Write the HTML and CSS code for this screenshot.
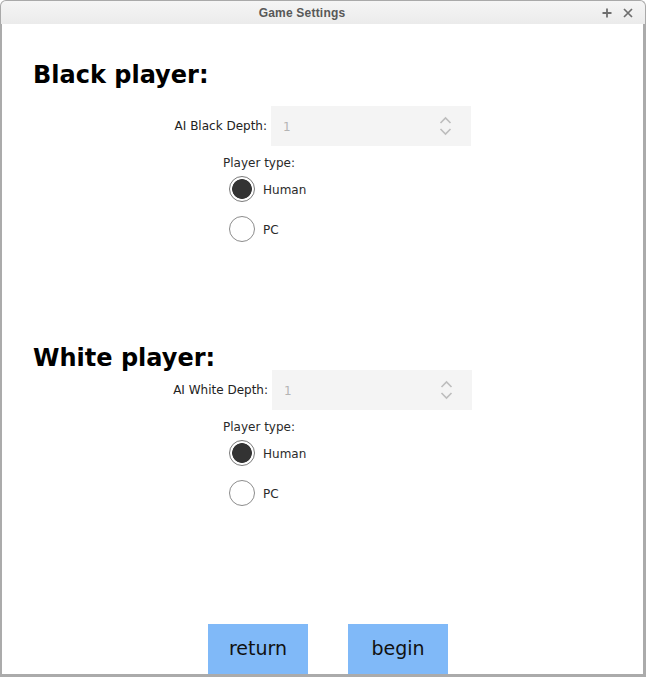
FILE: index.html
```html
<!DOCTYPE html>
<html>
<head>
<meta charset="utf-8">
<title>Game Settings</title>
<link rel="stylesheet" href="styles.css">
</head>
<body>
<div class="window">
  <div class="titlebar">
    <div class="title">Game Settings</div>
    <div class="controls">
      <svg class="ctl" width="10" height="10" viewBox="0 0 10 10"><path d="M5 0.5V9.5M0.5 5H9.5" stroke="#6e6e6e" stroke-width="1.8" fill="none"/></svg>
      <svg class="ctl" width="10" height="10" viewBox="0 0 10 10"><path d="M1 1L9 9M9 1L1 9" stroke="#6e6e6e" stroke-width="1.7" fill="none"/></svg>
    </div>
  </div>
  <div class="content">
    <section class="player">
      <h2 class="heading heading-black">Black player:</h2>
      <div class="depth-row">
        <label class="depth-label">AI Black Depth:</label>
        <div class="spin">
          <span class="spin-value">1</span>
          <svg class="spin-arrows" width="13" height="22" viewBox="0 0 13 22"><path d="M1.5 8L6.5 3L11.5 8M1.5 14L6.5 19L11.5 14" stroke="#bdbdbd" stroke-width="1.6" fill="none"/></svg>
        </div>
      </div>
      <div class="ptype">Player type:</div>
      <div class="radio radio-first"><span class="dot checked"></span><span class="rlabel">Human</span></div>
      <div class="radio radio-second"><span class="dot"></span><span class="rlabel">PC</span></div>
    </section>
    <section class="player">
      <h2 class="heading heading-white">White player:</h2>
      <div class="depth-row depth-row-white">
        <label class="depth-label">AI White Depth:</label>
        <div class="spin">
          <span class="spin-value">1</span>
          <svg class="spin-arrows" width="13" height="22" viewBox="0 0 13 22"><path d="M1.5 8L6.5 3L11.5 8M1.5 14L6.5 19L11.5 14" stroke="#bdbdbd" stroke-width="1.6" fill="none"/></svg>
        </div>
      </div>
      <div class="ptype">Player type:</div>
      <div class="radio radio-first"><span class="dot checked"></span><span class="rlabel">Human</span></div>
      <div class="radio radio-second"><span class="dot"></span><span class="rlabel">PC</span></div>
    </section>
    <div class="buttons">
      <button class="btn">return</button>
      <button class="btn">begin</button>
    </div>
  </div>
</div>
</body>
</html>
```

FILE: styles.css
```css
html, body {
  margin: 0;
  padding: 0;
  background: #ffffff;
}
.window {
  width: 646px;
  height: 677px;
  display: flex;
  flex-direction: column;
  box-sizing: border-box;
  font-family: "DejaVu Sans", sans-serif;
  color: #222222;
}
.titlebar {
  height: 24px;
  box-sizing: border-box;
  display: flex;
  align-items: center;
  border: 1px solid #a9a9a9;
  border-bottom: none;
  border-radius: 6px 6px 0 0;
  background: linear-gradient(#f5f5f5, #ebebeb);
}
.title {
  flex: 1;
  text-align: center;
  padding-left: 10px;
  font-family: "Liberation Sans", sans-serif;
  font-weight: bold;
  font-size: 12px;
  letter-spacing: 0.2px;
  color: #585858;
  line-height: 22px;
}
.controls {
  width: 52px;
  box-sizing: border-box;
  display: flex;
  justify-content: flex-end;
  align-items: center;
  gap: 11px;
  padding-right: 12px;
}
.ctl {
  display: block;
}
.content {
  flex: 1;
  display: flex;
  flex-direction: column;
  border-left: 2px solid #ababab;
  border-right: 3px solid #ababab;
  border-bottom: 3px solid #ababab;
  background: #ffffff;
}
.player {
  display: flex;
  flex-direction: column;
}
.heading {
  margin: 0;
  padding-left: 31px;
  font-size: 24px;
  font-weight: bold;
  line-height: 20px;
  color: #000000;
}
.heading-black {
  margin-top: 41px;
}
.heading-white {
  margin-top: 105px;
}
.depth-row {
  display: grid;
  grid-template-columns: 100px 200px;
  column-gap: 4px;
  align-items: center;
  margin-left: 165px;
  margin-top: 21px;
}
.depth-row-white {
  margin-left: 166px;
  margin-top: 2px;
}
.depth-label {
  text-align: right;
  font-size: 12px;
  color: #222222;
  padding-bottom: 1px;
}
.spin {
  height: 40px;
  background: #f4f4f4;
  display: flex;
  align-items: center;
  justify-content: space-between;
  padding: 0 19px 0 12px;
}
.spin-value {
  font-size: 12px;
  color: #b4b4b4;
  padding-top: 2px;
}
.spin-arrows {
  display: block;
}
.ptype {
  margin-top: 10px;
  margin-left: 221px;
  font-size: 12px;
  line-height: 14px;
  color: #2a2a2a;
}
.radio {
  display: flex;
  align-items: center;
  height: 28px;
  margin-left: 227px;
  gap: 8px;
}
.radio-first {
  margin-top: 5px;
}
.radio-second {
  margin-top: 12px;
}
.dot {
  width: 26px;
  height: 26px;
  box-sizing: border-box;
  border-radius: 50%;
  border: 1px solid #8c8c8c;
  background: #ffffff;
}
.dot.checked {
  border: 1.5px solid #7a7a7a;
  background: radial-gradient(circle, #333333 0, #333333 9.5px, #ffffff 10.2px);
}
.rlabel {
  font-size: 12px;
  color: #2a2a2a;
  padding-top: 1px;
}
.buttons {
  margin-top: auto;
  display: flex;
  gap: 40px;
  padding-left: 206px;
}
.btn {
  width: 100px;
  height: 50px;
  border: none;
  margin: 0;
  padding: 0 0 2px 0;
  background: #80b9f8;
  font-family: "DejaVu Sans", sans-serif;
  font-size: 19px;
  color: #111111;
}
```
